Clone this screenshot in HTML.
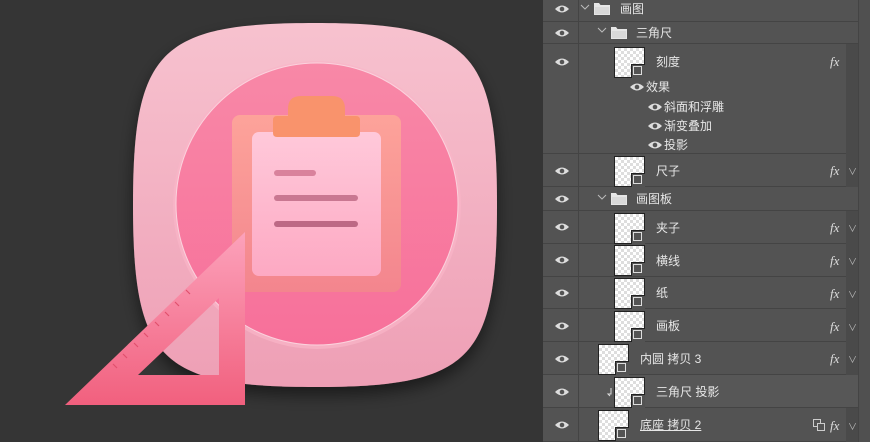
<!DOCTYPE html><html><head><meta charset="utf-8"><style>
*{margin:0;padding:0;box-sizing:border-box}
body{width:870px;height:442px;overflow:hidden;background:#353535;position:relative;font-family:"Liberation Sans","Noto Sans CJK SC",sans-serif}
.a{position:absolute}
.panel{left:543px;top:0;width:327px;height:442px;background:#535353}
.row{position:absolute;left:543px;width:315px;border-bottom:1px solid #444;background:#535353}
.eyecol{position:absolute;left:578px;top:0;width:1px;height:442px;background:#444}
.t{position:absolute;color:#e6e6e6;font-size:12px;line-height:14px;white-space:nowrap}
.thumb{position:absolute;width:31px;height:31px;border:1px solid #222;background-color:#fff;background-image:linear-gradient(45deg,#ddd 25%,transparent 25%,transparent 75%,#ddd 75%),linear-gradient(45deg,#ddd 25%,transparent 25%,transparent 75%,#ddd 75%);background-size:6px 6px;background-position:0 0,3px 3px}
.thumb::after{content:"";position:absolute;right:-1px;bottom:-1px;width:13px;height:13px;background:#535353;border-left:1px solid #222;border-top:1px solid #222}
.thumb::before{content:"";position:absolute;right:2px;bottom:2px;width:7px;height:7px;border:1.5px solid #ddd;z-index:2}
.fx{position:absolute;color:#ddd;font-style:italic;font-family:"Liberation Serif",serif;font-size:13px}
.chev{position:absolute;color:#bbb;font-size:9px}
</style></head><body>
<svg class="a" style="left:0;top:0" width="543" height="442">
<defs>
<linearGradient id="b" x1="0" y1="0" x2="0" y2="1"><stop offset="0" stop-color="#f7c2cf"/><stop offset="1" stop-color="#ee9fb5"/></linearGradient>
<linearGradient id="c" x1="0" y1="0" x2="0" y2="1"><stop offset="0" stop-color="#f888a7"/><stop offset="1" stop-color="#f7709a"/></linearGradient>
<linearGradient id="bd" x1="0" y1="0" x2="0" y2="1"><stop offset="0" stop-color="#fda39a"/><stop offset="1" stop-color="#f3858e"/></linearGradient>
<linearGradient id="pp" x1="0" y1="0" x2="0" y2="1"><stop offset="0" stop-color="#ffc9da"/><stop offset="1" stop-color="#fda9c3"/></linearGradient>
<linearGradient id="tr" x1="0" y1="0" x2="0" y2="1"><stop offset="0" stop-color="#fca2bb"/><stop offset="1" stop-color="#f1607e"/></linearGradient>
<filter id="s"><feDropShadow dx="0" dy="8" stdDeviation="8" flood-color="#000" flood-opacity=".5"/></filter>
</defs>
<path filter="url(#s)" d="M315 23 C470 23 497 50 497 205 C497 360 470 387 315 387 C160 387 133 360 133 205 C133 50 160 23 315 23Z" fill="url(#b)"/>
<circle cx="317" cy="205" r="144" fill="#f9b5c8" opacity=".7"/>
<circle cx="317" cy="204" r="141" fill="url(#c)" stroke="#fbd2dd" stroke-width="1"/>
<rect x="232" y="115" width="169" height="177" rx="8" fill="url(#bd)"/>
<rect x="252" y="132" width="129" height="144" rx="7" fill="url(#pp)"/>
<path d="M273 120 q0-4 4-4 h11 v-7 q0-13 13-13 h31 q13 0 13 13 v7 h11 q4 0 4 4 v13 q0 4-4 4 h-79 q-4 0-4-4z" fill="#f9936c"/>
<rect x="274" y="170" width="42" height="6" rx="3" fill="#d9829c"/>
<rect x="274" y="195" width="84" height="6" rx="3" fill="#c97791"/>
<rect x="274" y="221" width="84" height="6" rx="3" fill="#bd6985"/>
<path d="M245 232 L245 405 L65 405 Z M219 298 L138 375 L219 375 Z" fill="url(#tr)" fill-rule="evenodd"/>
<g stroke="#e0506d" stroke-width="1.2"><path d="M186 290l4 4M175 302l4 4M165 312l4 4M155 322l4 4M144 333l4 4M134 343l4 4M123 354l4 4M113 364l4 4"/></g>
</svg>
<div class="a panel"></div>
<div class="a" style="left:846px;top:44px;width:12px;height:398px;background:#4a4a4a"></div>
<div class="a" style="left:858px;top:0;width:12px;height:442px;background:#505050;border-left:1px solid #444"></div>

<div class="row" style="top:0;height:22px"></div>
<div class="row" style="top:22px;height:22px"></div>
<div class="row" style="top:44px;height:110px;width:303px"></div>
<div class="row" style="top:154px;height:33px;width:303px"></div>
<div class="row" style="top:187px;height:24px"></div>
<div class="row" style="top:211px;height:33px;width:303px"></div>
<div class="row" style="top:244px;height:33px;width:303px"></div>
<div class="row" style="top:277px;height:32px;width:303px"></div>
<div class="row" style="top:309px;height:33px;width:303px"></div>
<div class="row" style="top:342px;height:33px;width:303px"></div>
<div class="row" style="top:375px;height:33px;background:#575757"></div>
<div class="row" style="top:408px;height:34px;width:303px"></div>
<div class="eyecol"></div>

<svg class="a" style="left:550px;top:0" width="300" height="442">
<defs><g id="e"><path d="M-7 0 Q0 -7 7 0 Q0 7 -7 0Z" fill="#ddd"/><circle r="2.3" fill="#535353"/></g>
<g id="f"><path d="M0 0h5l1.5 2h9.5v10h-16z" fill="#e6e6e6"/><path d="M1 4h14v7h-14z" fill="#bdbdbd" opacity=".3"/></g></defs>
<use href="#e" x="12" y="9"/><use href="#e" x="12" y="33"/><use href="#e" x="12" y="62"/>
<use href="#e" x="12" y="171"/><use href="#e" x="12" y="199"/><use href="#e" x="12" y="227"/>
<use href="#e" x="12" y="260"/><use href="#e" x="12" y="293"/><use href="#e" x="12" y="326"/>
<use href="#e" x="12" y="359"/><use href="#e" x="12" y="392"/><use href="#e" x="12" y="425"/>
<use href="#e" x="87" y="87"/><use href="#e" x="105" y="107"/><use href="#e" x="105" y="126"/><use href="#e" x="105" y="145"/>
<path d="M31 5l4 4 4-4M48 28l4 4 4-4M48 195l4 4 4-4" stroke="#bbb" fill="none"/>
<use href="#f" x="44" y="3"/><use href="#f" x="61" y="27"/><use href="#f" x="61" y="193"/>
<path d="M302 65l4-4 4 4" stroke="#bbb" fill="none"/>
<path d="M61 388v6h-3l2 2" stroke="#ddd" fill="none"/>
</svg>

<div class="t" style="left:620px;top:2px">画图</div>
<div class="t" style="left:636px;top:26px">三角尺</div>
<div class="thumb" style="left:614px;top:47px"></div><div class="t" style="left:656px;top:55px">刻度</div>
<div class="t" style="left:646px;top:80px">效果</div>
<div class="t" style="left:664px;top:100px">斜面和浮雕</div>
<div class="t" style="left:664px;top:119px">渐变叠加</div>
<div class="t" style="left:664px;top:138px">投影</div>
<div class="thumb" style="left:614px;top:156px"></div><div class="t" style="left:656px;top:164px">尺子</div>
<div class="t" style="left:636px;top:192px">画图板</div>
<div class="thumb" style="left:614px;top:213px"></div><div class="t" style="left:656px;top:221px">夹子</div>
<div class="thumb" style="left:614px;top:245px"></div><div class="t" style="left:656px;top:254px">横线</div>
<div class="thumb" style="left:614px;top:278px"></div><div class="t" style="left:656px;top:286px">纸</div>
<div class="thumb" style="left:614px;top:311px"></div><div class="t" style="left:656px;top:319px">画板</div>
<div class="thumb" style="left:598px;top:344px"></div><div class="t" style="left:640px;top:352px">内圆 拷贝 3</div>
<div class="thumb" style="left:614px;top:377px"></div><div class="t" style="left:656px;top:385px">三角尺 投影</div>
<div class="thumb" style="left:598px;top:410px"></div><div class="t" style="left:640px;top:418px;text-decoration:underline">底座 拷贝 2</div>

<div class="fx" style="left:830px;top:54px">fx</div>
<div class="fx" style="left:830px;top:163px">fx</div><div class="chev" style="left:848px;top:165px">∨</div>
<div class="fx" style="left:830px;top:220px">fx</div><div class="chev" style="left:848px;top:222px">∨</div>
<div class="fx" style="left:830px;top:253px">fx</div><div class="chev" style="left:848px;top:255px">∨</div>
<div class="fx" style="left:830px;top:286px">fx</div><div class="chev" style="left:848px;top:288px">∨</div>
<div class="fx" style="left:830px;top:319px">fx</div><div class="chev" style="left:848px;top:321px">∨</div>
<div class="fx" style="left:830px;top:351px">fx</div><div class="chev" style="left:848px;top:353px">∨</div>
<div class="fx" style="left:830px;top:418px">fx</div><div class="chev" style="left:848px;top:420px">∨</div>
<div class="a" style="left:813px;top:419px;width:8px;height:8px;border:1px solid #ccc"></div><div class="a" style="left:817px;top:423px;width:8px;height:8px;border:1px solid #ccc;background:#535353"></div>
</body></html>
